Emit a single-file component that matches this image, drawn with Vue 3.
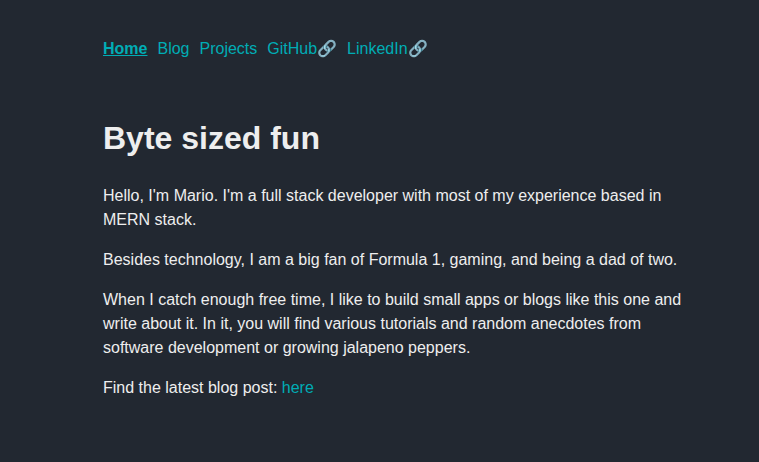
<script setup>
const links = [
  { label: 'Home', href: '/', active: true },
  { label: 'Blog', href: '/blog' },
  { label: 'Projects', href: '/projects' },
  { label: 'GitHub🔗', href: '#github' },
  { label: 'LinkedIn🔗', href: '#linkedin' },
]
</script>

<template>
  <div class="page">
    <nav class="nav">
      <a
        v-for="link in links"
        :key="link.label"
        :href="link.href"
        :class="{ active: link.active }"
      >{{ link.label }}</a>
    </nav>
    <main>
      <h1>Byte sized fun</h1>
      <p>Hello, I'm Mario. I'm a full stack developer with most of my experience based in MERN stack.</p>
      <p>Besides technology, I am a big fan of Formula 1, gaming, and being a dad of two.</p>
      <p>When I catch enough free time, I like to build small apps or blogs like this one and write about it. In it, you will find various tutorials and random anecdotes from software development or growing jalapeno peppers.</p>
      <p>Find the latest blog post: <a href="/blog/latest">here</a></p>
    </main>
  </div>
</template>

<style>
body {
  margin: 0;
  background: #222831;
}
</style>

<style scoped>
.page {
  max-width: 581px;
  margin: 0 auto;
  padding: 37px 24px 36px 52px;
  color: #eeeeee;
  font-family: "Liberation Sans", Arial, sans-serif;
  font-size: 16px;
  line-height: 24px;
}
.nav {
  display: flex;
  flex-wrap: wrap;
  gap: 10px;
}
a {
  color: #00adb5;
  text-decoration: none;
}
.active {
  font-weight: bold;
  text-decoration: underline;
}
h1 {
  margin: 53px 0 22px;
  font-size: 32px;
  line-height: 48px;
}
p {
  margin: 0 0 16px;
}
</style>
